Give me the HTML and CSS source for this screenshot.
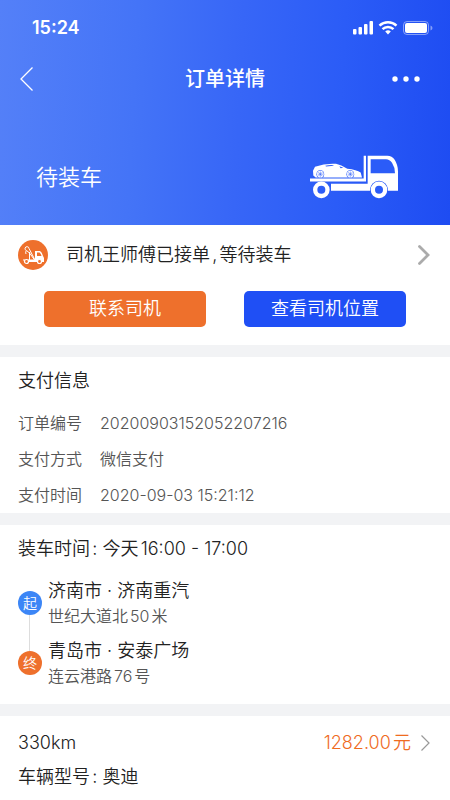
FILE: index.html
```html
<!DOCTYPE html>
<html lang="zh-CN">
<head>
<meta charset="utf-8">
<meta name="viewport" content="width=device-width, initial-scale=1">
<title>订单详情</title>
<link rel="stylesheet" href="styles.css">
</head>
<body>
<header class="hero">
  <div class="status-bar">
    <span class="clock">15:24</span>
    <svg class="status-icons" viewBox="0 0 82 14" aria-hidden="true">
      <g fill="#fff">
        <rect x="1" y="8" width="3.500" height="5.500" rx="1"/>
        <rect x="6.500" y="6" width="3.500" height="7.500" rx="1"/>
        <rect x="12" y="3" width="3.500" height="10.500" rx="1"/>
        <rect x="17.500" y="0" width="3.500" height="13.500" rx="1"/>
        <path d="M36 13.500l-2.800-3a4 4 0 0 1 5.600 0z"/>
      </g>
      <path d="M27.500 4.700a12.500 12.500 0 0 1 17 0M30.500 8.200a8 8 0 0 1 11 0" fill="none" stroke="#fff" stroke-width="2.500"/>
      <rect x="51.500" y=".5" width="25" height="13" rx="3.500" fill="none" stroke="#fff" stroke-opacity=".45"/>
      <rect x="53" y="2" width="22" height="10" rx="2" fill="#fff"/>
      <path d="M78.500 4.500q2 .6 2 2.500t-2 2.500z" fill="#fff" fill-opacity=".45"/>
    </svg>
  </div>
  <nav class="nav-bar">
    <button class="nav-button" type="button" aria-label="返回">
      <svg class="back-icon" viewBox="0 0 14 24" aria-hidden="true"><path d="M12.500 .5L1 12l11.500 11.500" fill="none" stroke="#fff" stroke-width="1.300"/></svg>
    </button>
    <h1 class="page-title">订单详情</h1>
    <button class="nav-button nav-more" type="button" aria-label="更多">
      <svg class="more-icon" viewBox="0 0 28 6" aria-hidden="true"><g fill="#fff"><circle cx="3" cy="3" r="2.700"/><circle cx="14" cy="3" r="2.700"/><circle cx="25" cy="3" r="2.700"/></g></svg>
    </button>
  </nav>
  <div class="order-state">
    <p class="state-text">待装车</p>
    <svg class="truck" viewBox="60 50 264 129" aria-hidden="true">
      <path fill="#fff" d="M60 119H221V51H228V128H60zM123 135H233V51H292Q306 51 314 63Q324 79 324 98V156H294A27 27 0 0 0 240 156H123z"/>
      <path fill="#2b5cf8" d="M242 61H288Q299 61 306 72Q315 86 315 103H242z"/>
      <circle cx="94" cy="153" r="18.500" fill="none" stroke="#fff" stroke-width="13"/>
      <circle cx="267" cy="153" r="27" fill="#2b5cf8"/>
      <circle cx="267" cy="153" r="18.500" fill="#2b5cf8" stroke="#fff" stroke-width="13"/>
      <path fill="#fff" d="M70 110L69 96L75 84Q105 73 138 75Q153 78 172 90Q200 93 212 101L216 116H77z"/>
      <path fill="#2b5cf8" d="M106 81Q118 78 130 79L131 81L108 83zM148 82L160 87L152 88z"/>
      <g fill="#2b5cf8"><circle cx="91" cy="106" r="11.500"/><circle cx="181" cy="106" r="11.500"/></g>
      <g fill="#fff"><circle cx="91" cy="106" r="10"/><circle cx="181" cy="106" r="10"/></g>
      <path d="M91 98v16M83 106h16M85 100l12 12M97 100l-12 12M181 98v16M173 106h16M175 100l12 12M187 100l-12 12" stroke="#2b5cf8" stroke-width="1.500"/>
    </svg>
  </div>
</header>
<main class="sections">
  <section class="card driver-card">
    <a class="driver-link" href="#driver">
      <svg class="driver-icon" viewBox="0 0 30 30" aria-hidden="true">
        <circle cx="15" cy="15" r="15" fill="#ee702c"/>
        <path d="M8 14Q7 12 8.500 10.500L11.500 13L17 20.500M11.500 12V20.500M8.200 10.500a2 2 0 1 1 2.800-2L17 20" fill="none" stroke="#fff"/>
        <path fill="#fff" d="M10 19.500H17V11H22Q24 12 25 16L26 18V22H24A3 3 0 0 0 19 22H11z"/>
        <path fill="#ee702c" d="M19 12.500H21.500Q23 13.500 23.500 16H19z"/>
        <g fill="#ee702c" stroke="#fff" stroke-width="1.200"><circle cx="8.500" cy="21.500" r="2"/><circle cx="21.500" cy="21.500" r="2"/></g>
        <path d="M5 20h2" stroke="#fff"/>
      </svg>
      <span class="driver-text">司机王师傅已接单,等待装车</span>
      <svg class="chevron" viewBox="0 0 12 20" aria-hidden="true"><path d="M1.500 1.500L10 10l-8.500 8.500" fill="none" stroke="#ababab" stroke-width="2.800" stroke-linecap="round"/></svg>
    </a>
    <div class="actions">
      <button class="action action-call" type="button">联系司机</button>
      <button class="action action-locate" type="button">查看司机位置</button>
    </div>
  </section>

  <section class="card pay-card">
    <h2 class="card-title">支付信息</h2>
    <dl class="details">
      <dt>订单编号</dt><dd>20200903152052207216</dd>
      <dt>支付方式</dt><dd>微信支付</dd>
      <dt>支付时间</dt><dd>2020-09-03 15:21:12</dd>
    </dl>
  </section>

  <section class="card route-card">
    <h2 class="card-title">装车时间: 今天16:00 - 17:00</h2>
    <ol class="route">
      <li class="stop">
        <span class="pin pin-start">起</span>
        <div class="place"><p class="place-name">济南市 · 济南重汽</p><p class="place-address">世纪大道北50米</p></div>
      </li>
      <li class="stop">
        <span class="pin pin-end">终</span>
        <div class="place"><p class="place-name">青岛市 · 安泰广场</p><p class="place-address">连云港路76号</p></div>
      </li>
    </ol>
  </section>

  <section class="card trip-card">
    <div class="trip-row">
      <span>330km</span>
      <a class="price" href="#price">1282.00元
        <svg class="price-chevron" viewBox="0 0 9 16" aria-hidden="true"><path d="M.5 .5L8 8L.5 15.500" fill="none" stroke="#999" stroke-width="1.200"/></svg>
      </a>
    </div>
    <p class="trip-model">车辆型号: 奥迪</p>
  </section>
</main>
</body>
</html>
```
FILE: styles.css
```css
* {
  box-sizing: border-box;
}

body,
h1,
h2,
p,
dl,
dd,
ol {
  margin: 0;
  padding: 0;
}

body {
  background: #fff;
  color: #222;
  font-family: Inter, "Noto Sans CJK SC", sans-serif;
  font-size: 18px;
  font-weight: 350;
  line-height: 24px;
  text-autospace: normal;
}

h1,
h2 {
  font-size: 18px;
  font-weight: 350;
}

a {
  color: inherit;
  text-decoration: none;
}

button {
  border: 0;
  padding: 0;
  font: inherit;
  color: #fff;
  background: none;
  cursor: pointer;
}

svg {
  display: block;
  flex: none;
}

.hero {
  color: #fff;
  background: linear-gradient(93deg, #5480f8 0%, #4474f7 30%, #3766f7 53%, #2b5cf7 75%, #1e4cf2 100%);
}

.status-bar {
  display: flex;
  align-items: center;
  justify-content: space-between;
  padding: 16px 16px 0 32px;
}

.clock {
  font-size: 18px;
  font-weight: 600;
}

.status-icons {
  width: 82px;
  height: 14px;
}

.nav-bar {
  display: grid;
  grid-template-columns: 60px 1fr 60px;
  align-items: center;
  padding: 19px 20px 0;
}

.nav-button {
  display: flex;
  align-items: center;
  height: 40px;
}

.nav-more {
  justify-content: flex-end;
  padding-right: 10px;
}

.back-icon {
  width: 14px;
  height: 24px;
}

.more-icon {
  width: 28px;
  height: 6px;
}

.page-title {
  font-size: 20px;
  font-weight: 500;
  text-align: center;
}

.order-state {
  display: flex;
  align-items: center;
  justify-content: space-between;
  padding: 56px 52px 26px 36px;
}

.state-text {
  font-size: 22px;
}

.truck {
  width: 88px;
  height: 44px;
}

.sections {
  display: grid;
  gap: 12px;
  background: #f2f3f5;
}

.card {
  padding: 12px 18px;
  background: #fff;
}

.driver-card {
  padding-top: 15px;
  padding-bottom: 18px;
}

.driver-link {
  display: flex;
  align-items: center;
  gap: 18px;
}

.driver-icon {
  width: 30px;
  height: 30px;
}

.driver-text {
  flex: 1;
}

.chevron {
  width: 12px;
  height: 20px;
  margin-right: 2px;
}

.actions {
  display: grid;
  grid-template-columns: 1fr 1fr;
  gap: 38px;
  padding: 21px 26px 0;
}

.action {
  height: 36px;
  border-radius: 5px;
}

.action-call {
  background: #ee702c;
}

.action-locate {
  background: #1f4ff5;
}

.pay-card {
  padding-bottom: 0;
}

.details {
  display: grid;
  grid-template-columns: max-content 1fr;
  column-gap: 18px;
  padding-top: 12px;
  color: #555;
  font-size: 16px;
  line-height: 36px;
}

.route-card {
  padding-bottom: 16px;
}

.route {
  display: grid;
  gap: 10px;
  padding-top: 17px;
  list-style: none;
}

.stop {
  position: relative;
  display: flex;
  align-items: center;
  gap: 6px;
}

.stop:first-child::before {
  content: "";
  position: absolute;
  top: 37px;
  left: 11px;
  width: 1px;
  height: 36px;
  background: #ddd;
}

.pin {
  width: 24px;
  border-radius: 50%;
  color: #fff;
  font-size: 14px;
  text-align: center;
}

.pin-start {
  background: #3c86f6;
}

.pin-end {
  background: #ee702c;
}

.place-name {
  line-height: 26px;
}

.place-address {
  color: #555;
  font-size: 16px;
}

.trip-card {
  padding-top: 15px;
}

.trip-row {
  display: flex;
  justify-content: space-between;
}

.price {
  display: flex;
  align-items: center;
  gap: 10px;
  padding-right: 2px;
  color: #ef6c1f;
}

.price-chevron {
  width: 9px;
  height: 16px;
}

.trip-model {
  padding-top: 10px;
}
```
